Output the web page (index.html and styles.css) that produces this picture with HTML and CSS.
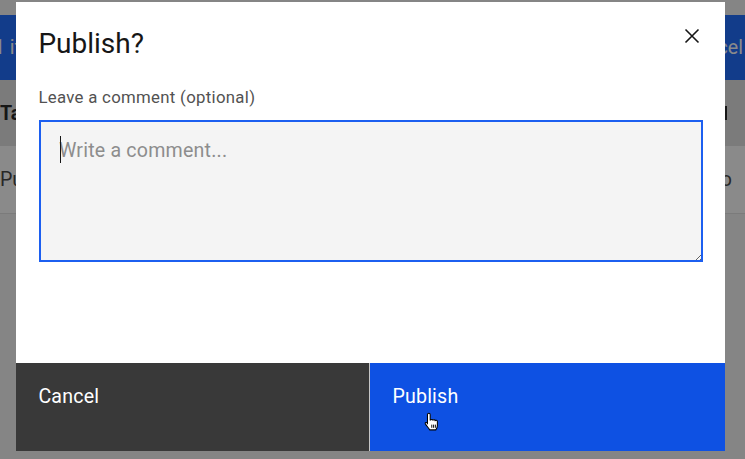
FILE: index.html
```html
<!DOCTYPE html>
<html lang="en">
<head>
<meta charset="utf-8">
<title>Publish?</title>
<link rel="stylesheet" href="styles.css">
</head>
<body>
<div class="page">
  <div class="batch-bar">
    <span class="batch-count">1 item selected</span>
    <span class="batch-cancel">Cancel</span>
  </div>
  <div class="table-head">
    <span class="table-title">Table title</span>
    <span class="head-icon"></span>
  </div>
  <div class="table-row">
    <span class="row-name">Publish draft</span>
    <span class="row-end">Info</span>
  </div>
</div>

<div class="overlay"></div>

<div class="modal" role="dialog" aria-labelledby="modal-title">
  <header class="modal-header">
    <h2 class="modal-title" id="modal-title">Publish?</h2>
    <button class="modal-close" type="button" aria-label="Close">
      <svg width="16" height="16" viewBox="0 0 16 16" aria-hidden="true">
        <path d="M1.5 1.5 L14.5 14.5 M14.5 1.5 L1.5 14.5" stroke="#161616" stroke-width="1.6" fill="none"/>
      </svg>
    </button>
  </header>
  <div class="modal-body">
    <label class="field-label" for="comment">Leave a comment (optional)</label>
    <div class="field-wrap">
      <textarea class="field" id="comment" placeholder="Write a comment..." autofocus></textarea>
      <span class="caret" aria-hidden="true"></span>
    </div>
  </div>
  <footer class="modal-footer">
    <button class="btn btn-secondary" type="button">Cancel</button>
    <button class="btn btn-primary" type="button">Publish
      <svg class="pointer" width="16" height="20" viewBox="0 0 15 19" aria-hidden="true">
        <path d="M4.5 1.2 C5.3 1.2 5.8 1.7 5.8 2.5 L5.8 7.5 L6.3 7.5 C6.8 6.9 8 6.9 8.4 7.7 C9 7.1 10.2 7.2 10.5 8.1 C11.1 7.6 12.4 7.8 12.6 8.8 L12.6 13 C12.6 14.8 11.8 16 11.1 17 L5.4 17 C4.6 15.6 2.5 13.2 1.2 11.3 C0.7 10.5 1.5 9.5 2.5 10.1 L3.2 10.8 L3.2 2.5 C3.2 1.7 3.7 1.2 4.5 1.2 Z" fill="#fff" stroke="#000" stroke-width="1"/>
        <path d="M7.3 12 L7.3 15 M9 12 L9 15 M10.7 12 L10.7 15" stroke="#000" stroke-width="0.9"/>
      </svg>
    </button>
  </footer>
</div>
</body>
</html>
```

FILE: styles.css
```css
* { box-sizing: border-box; }

html, body {
  margin: 0;
  height: 100%;
}

body {
  font-family: Roboto, "Noto Sans", Arial, sans-serif;
  background: #f4f4f4;
  color: #161616;
  overflow: hidden;
}

/* ---------- page behind the modal ---------- */
.page {
  padding-top: 15px;
}

.batch-bar {
  height: 65px;
  background: #0f62fe;
  color: #ffffff;
  font-size: 19.6px;
  display: flex;
  align-items: center;
  justify-content: space-between;
  padding-right: 2px;
}

.batch-count { margin-left: -6px; }

.table-head {
  height: 66px;
  background: #e0e0e0;
  display: flex;
  align-items: center;
  justify-content: space-between;
  padding-right: 18px;
  font-size: 19.6px;
  font-weight: 700;
}

.head-icon {
  width: 12px;
  height: 14px;
  background: #161616;
}

.table-row {
  height: 68px;
  background: #ffffff;
  border-bottom: 1px solid #e0e0e0;
  display: flex;
  align-items: center;
  justify-content: space-between;
  padding-right: 13px;
  font-size: 19.6px;
  color: #393939;
}

.overlay {
  position: fixed;
  inset: 0;
  background: rgba(22, 22, 22, 0.5);
}

/* ---------- modal ---------- */
.modal {
  position: fixed;
  left: 16px;
  top: 2px;
  width: 709px;
  height: 449px;
  background: #ffffff;
  display: flex;
  flex-direction: column;
}

.modal-header {
  display: flex;
  justify-content: space-between;
  align-items: flex-start;
}

.modal-title {
  margin: 22.4px 0 0 22.4px;
  font-size: 28px;
  line-height: 39.2px;
  font-weight: 400;
  color: #161616;
}

.modal-close {
  width: 67px;
  height: 67px;
  border: 0;
  background: transparent;
  padding: 0;
  display: flex;
  align-items: center;
  justify-content: center;
}

.modal-body {
  flex: 1;
  display: flex;
  flex-direction: column;
  padding: 17px 22px 0 22.4px;
}

.field-label {
  font-size: 16.8px;
  line-height: 22.4px;
  letter-spacing: 0.3px;
  color: #525252;
  margin-bottom: 11.6px;
}

.field-wrap {
  position: relative;
  width: 664px;
  height: 142px;
  margin-left: 0.6px;
}

.field {
  display: block;
  width: 664px;
  height: 142px;
  padding: 17.5px 20px;
  border: 0;
  background: #f4f4f4;
  outline: 2px solid #1c5ff0;
  outline-offset: -2px;
  font-family: inherit;
  font-size: 19.6px;
  line-height: 25.2px;
  letter-spacing: 0.2px;
  color: #161616;
  caret-color: transparent;
  resize: both;
}

.field::placeholder { color: #8d8d8d; }

.field:focus {
  outline: 2px solid #1c5ff0;
  outline-offset: -2px;
}

.caret {
  position: absolute;
  left: 21px;
  top: 16px;
  width: 1px;
  height: 27px;
  background: #161616;
  pointer-events: none;
}

.modal-footer {
  height: 88px;
  display: grid;
  grid-template-columns: 353px 355px;
  gap: 1px;
  background: #c6c6c6;
}

.btn {
  position: relative;
  border: 0;
  margin: 0;
  font-family: inherit;
  font-size: 19.6px;
  line-height: 25.2px;
  letter-spacing: 0.2px;
  color: #ffffff;
  text-align: left;
  display: flex;
  align-items: flex-start;
  padding: 20.5px 22.4px;
}

.btn-secondary { background: #393939; }
.btn-primary { background: #0e51e3; }

.pointer {
  position: absolute;
  left: 54px;
  top: 49px;
}
```
